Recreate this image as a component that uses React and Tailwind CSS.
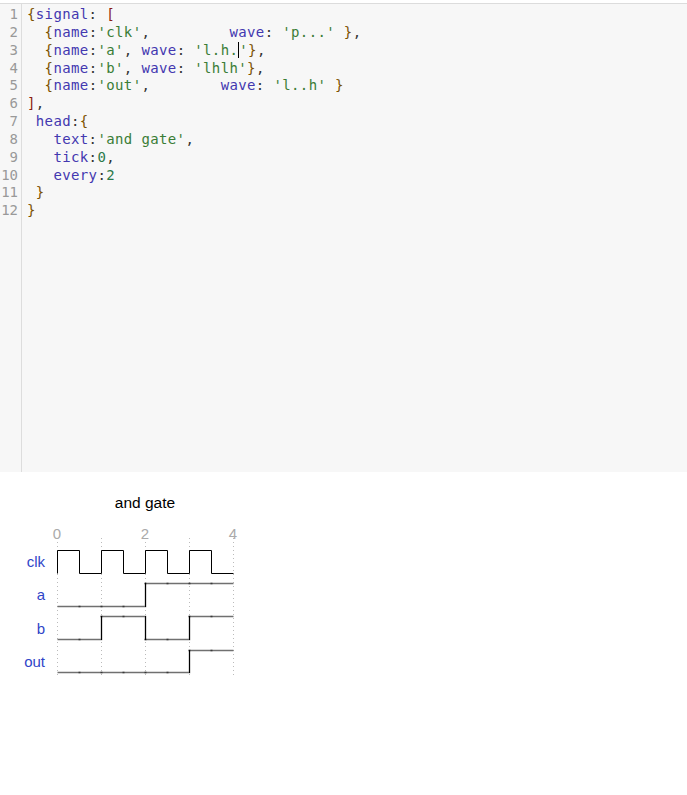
import React from 'react';

const P = ({ children }) => <span className="text-[#4338b0]">{children}</span>;
const S = ({ children }) => <span className="text-[#3a7d36]">{children}</span>;
const N = ({ children }) => <span className="text-[#2b7a4b]">{children}</span>;
const B = ({ children }) => <span className="text-[#7c5200]">{children}</span>;
const R = ({ children }) => <span className="text-[#8a1c12]">{children}</span>;
const Cursor = () => (
  <span className="inline-block w-0 h-[16px] border-l border-black align-[-3px]" />
);

const LINES = [
  <><B>{'{'}</B><P>signal</P>: <R>[</R></>,
  <>  <B>{'{'}</B><P>name</P>:<S>'clk'</S>,         <P>wave</P>: <S>'p...'</S> <B>{'}'}</B>,</>,
  <>  <B>{'{'}</B><P>name</P>:<S>'a'</S>, <P>wave</P>: <S>'l.h.<Cursor />'</S><B>{'}'}</B>,</>,
  <>  <B>{'{'}</B><P>name</P>:<S>'b'</S>, <P>wave</P>: <S>'lhlh'</S><B>{'}'}</B>,</>,
  <>  <B>{'{'}</B><P>name</P>:<S>'out'</S>,        <P>wave</P>: <S>'l..h'</S> <B>{'}'}</B></>,
  <><R>]</R>,</>,
  <> <P>head</P>:<B>{'{'}</B></>,
  <>   <P>text</P>:<S>'and gate'</S>,</>,
  <>   <P>tick</P>:<N>0</N>,</>,
  <>   <P>every</P>:<N>2</N></>,
  <> <B>{'}'}</B></>,
  <><B>{'}'}</B></>,
];

// x grid: cycle = 44px, starts at 57
const X0 = 57;
const H = 22;
const Y0 = 472;

function Wave({ pts, color = '#000', w = 1 }) {
  return (
    <polyline
      points={pts.map(([x, y]) => `${x + 0.5},${y - Y0 + 0.5}`).join(' ')}
      fill="none"
      stroke={color}
      strokeWidth={w}
    />
  );
}

function levelWave(levels, hi, lo) {
  // levels per half-cycle
  const pts = [];
  let prev = null;
  levels.forEach((lv, i) => {
    const x = X0 + i * H;
    const y = lv ? hi : lo;
    if (prev === null) pts.push([x, y]);
    else if (prev !== lv) {
      pts.push([x, prev ? hi : lo]);
      pts.push([x, y]);
    }
    prev = lv;
  });
  pts.push([X0 + levels.length * H, prev ? hi : lo]);
  return pts;
}

function Diagram() {
  const clk = [[57, 573], [57, 550]];
  for (let i = 0; i < 4; i++) {
    const x = X0 + i * 44;
    clk.push([x + 22, 550], [x + 22, 573], [x + 44, 573]);
    if (i < 3) clk.push([x + 44, 550]);
  }
  const rows = [
    { name: 'clk', base: 567 },
    { name: 'a', base: 600 },
    { name: 'b', base: 634 },
    { name: 'out', base: 667 },
  ];
  const data = [
    [[0, 0, 0, 0, 1, 1, 1, 1], 583, 606],
    [[0, 0, 1, 1, 0, 0, 1, 1], 616, 639],
    [[0, 0, 0, 0, 0, 0, 1, 1], 650, 672],
  ];

  return (
    <svg width="260" height="220" className="block" style={{ fontFamily: '"Liberation Sans", Arial, sans-serif' }}>
      {[57, 101, 145, 189, 233].map((x) => (
        <line key={x} x1={x + 0.5} x2={x + 0.5} y1={538 - Y0} y2={676 - Y0} stroke="#bbb" strokeDasharray="1 3" />
      ))}
      <text x="145" y={508 - Y0} textAnchor="middle" fontSize="15.5" fill="#000">and gate</text>
      {[['0', 57], ['2', 145], ['4', 233]].map(([t, x]) => (
        <text key={t} x={x} y={539 - Y0} textAnchor="middle" fontSize="15" fill="#aaa">{t}</text>
      ))}
      {rows.map((r) => (
        <text key={r.name} x="45" y={r.base - Y0} textAnchor="end" fontSize="15" fill="#2f45c8">{r.name}</text>
      ))}
      <Wave pts={clk} />
      {data.map(([lv, hi, lo], j) => (
        <g key={j}>
          <Wave pts={levelWave(lv, hi, lo)} color="#707070" w={1.5} />
          {lv.map((v, i) =>
            i > 0 ? (
              <rect key={i} x={X0 + i * H - 0.5} y={(v ? hi : lo) - Y0 - 0.25} width="2" height="1.5" fill="#3a3a3a" />
            ) : null
          )}
          {lv.map((v, i) =>
            i > 0 && v !== lv[i - 1] ? (
              <line key={`e${i}`} x1={X0 + i * H + 0.5} x2={X0 + i * H + 0.5} y1={hi - Y0} y2={lo - Y0 + 1} stroke="#000" />
            ) : null
          )}
        </g>
      ))}
    </svg>
  );
}

export default function App() {
  return (
    <div className="w-[687px] h-[795px] bg-white pt-[3px]">
      <div className="h-[469px] bg-[#f7f7f7] border-t border-[#dcdcdc] flex">
        <div className="w-[22px] border-r border-[#dddddd] pt-[2px] text-right pr-[3px] text-[14px] leading-[17.85px] text-[#999]" style={{ fontFamily: '"DejaVu Sans Mono", monospace' }}>
          {LINES.map((_, i) => (
            <div key={i}>{i + 1}</div>
          ))}
        </div>
        <div className="pl-[5px] pt-[2px] text-[14px] leading-[17.85px] tracking-[0.37px] text-[#333] whitespace-pre" style={{ fontFamily: '"DejaVu Sans Mono", monospace' }}>
          {LINES.map((l, i) => (
            <div key={i}>{l}</div>
          ))}
        </div>
      </div>
      <Diagram />
    </div>
  );
}
